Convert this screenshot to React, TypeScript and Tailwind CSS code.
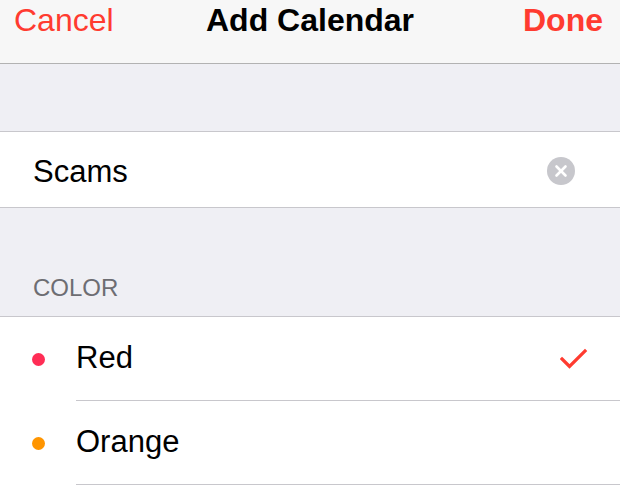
import { X } from 'lucide-react';

const FONT = { fontFamily: '"Liberation Sans", Arial, sans-serif' };

interface ColorOption {
  name: string;
  dot: string;
  selected?: boolean;
}

const COLORS: ColorOption[] = [
  { name: 'Red', dot: 'bg-[#ff2d55]', selected: true },
  { name: 'Orange', dot: 'bg-[#ff9500]' },
];

export default function App() {
  return (
    <div className="flex h-[488px] w-[620px] flex-col overflow-hidden bg-[#efeff4]" style={FONT}>
      {/* nav bar */}
      <header className="relative flex h-[64px] shrink-0 items-start justify-between border-b border-[#b2b2b2] bg-[#f7f7f7] pl-[14px] pr-[17px]">
        <span className="text-[32px] leading-[40px] text-[#ff3b30]">Cancel</span>
        <span className="absolute left-0 right-0 top-0 text-center text-[32px] font-bold leading-[40px] text-black">
          Add Calendar
        </span>
        <span className="text-[32px] font-bold leading-[40px] text-[#ff3b30]">Done</span>
      </header>

      <div className="h-[67px] shrink-0" />

      {/* name field */}
      <div className="flex h-[77px] shrink-0 items-center justify-between border-y border-[#c8c7cc] bg-white pl-[33px] pr-[45px]">
        <span className="pt-[5px] text-[31px] leading-[36px] text-black">Scams</span>
        <span className="mt-[2px] flex h-[28px] w-[28px] items-center justify-center rounded-full bg-[#c7c7cc]">
          <X size={18} strokeWidth={3.5} color="#ffffff" />
        </span>
      </div>

      <div className="flex h-[108px] shrink-0 items-end pb-[14px] pl-[33px]">
        <span className="text-[24px] leading-[28px] text-[#6d6d72]">COLOR</span>
      </div>

      {/* color list */}
      <ul className="flex-1 border-t border-[#c8c7cc] bg-white">
        {COLORS.map((c) => (
          <li key={c.name} className="flex h-[84px] items-stretch">
            <div className="flex w-[76px] items-center pl-[32px]">
              <span className={`h-[13px] w-[13px] rounded-full ${c.dot}`} />
            </div>
            <div className="flex flex-1 items-center justify-between border-b border-[#c8c7cc] pr-[32px]">
              <span className="text-[31px] text-black">{c.name}</span>
              {c.selected && (
                <svg width="28" height="22" viewBox="0 0 28 22" fill="none">
                  <path
                    d="M2 11 L9.5 18.5 L25 3"
                    stroke="#ff3b30"
                    strokeWidth="3.2"
                    strokeLinecap="square"
                  />
                </svg>
              )}
            </div>
          </li>
        ))}
      </ul>
    </div>
  );
}
